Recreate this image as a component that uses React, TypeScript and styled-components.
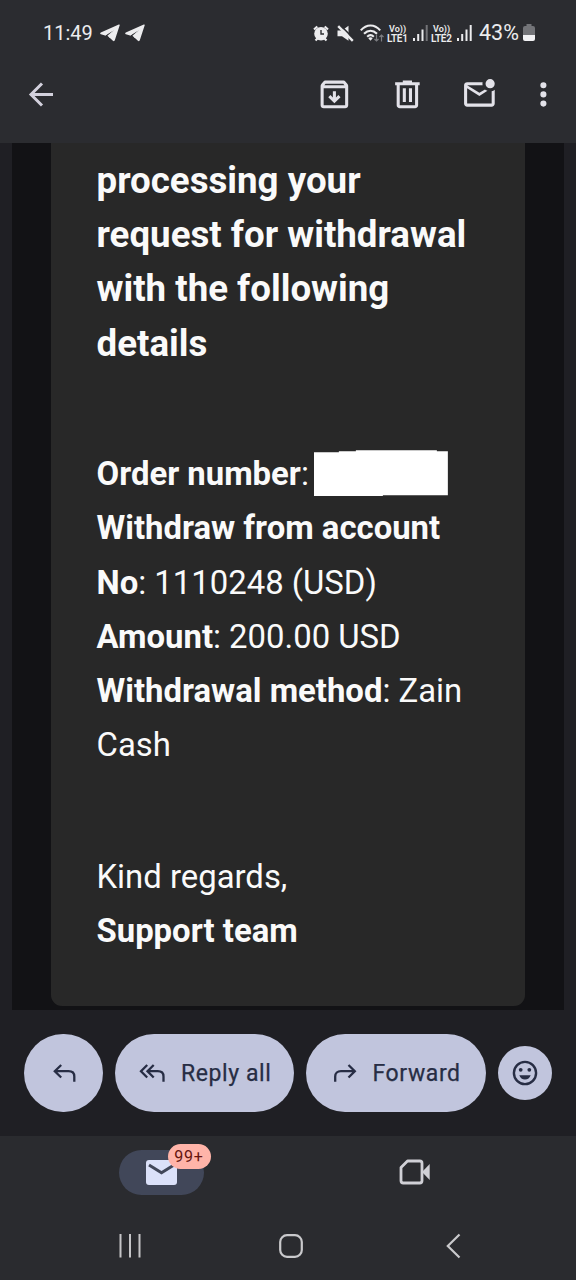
import React from "react";
import styled, { createGlobalStyle } from "styled-components";

const GlobalStyle = createGlobalStyle`
  *, *::before, *::after { box-sizing: border-box; }
  body { margin: 0; background: #1f1f24; }
  svg { display: block; flex: none; }
`;

const Screen = styled.div`
  width: 576px;
  height: 1280px;
  display: flex;
  flex-direction: column;
  overflow: hidden;
  background: #1f1f24;
  font-family: Roboto, "Liberation Sans", sans-serif;
`;

const TopArea = styled.header`
  height: 143px;
  background: #2b2c30;
`;

const StatusBar = styled.div`
  height: 66px;
  padding: 0 41px 0 43px;
  display: flex;
  justify-content: space-between;
  align-items: center;
  color: #ececee;
`;

const StatusGroup = styled.div`
  display: flex;
  align-items: center;
`;

const StatusItem = styled.span<{ $after?: number }>`
  margin-right: ${(p) => p.$after ?? 0}px;
`;

const StatusText = styled.span<{ $width: number; $size?: number }>`
  display: block;
  width: ${(p) => p.$width}px;
  font-size: ${(p) => p.$size ?? 20}px;
  line-height: 24px;
  white-space: nowrap;
`;

const Carrier = styled.span<{ $width: number }>`
  width: ${(p) => p.$width}px;
  display: flex;
  flex-direction: column;
  gap: 1px;
  padding-top: 1px;
  font-size: 10px;
  line-height: 9px;
  font-weight: 600;
  letter-spacing: -0.3px;
  white-space: nowrap;
`;

const CarrierTop = styled.span`
  font-size: 9px;
  line-height: 8px;
  padding-left: 2px;
  letter-spacing: 0;
`;

const Toolbar = styled.div`
  height: 57px;
  padding: 0 14.5px 0 22px;
  display: flex;
  align-items: center;
`;

const ToolActions = styled.div`
  margin-left: auto;
  display: flex;
  align-items: center;
`;

const ToolIcon = styled.span<{ $after?: number }>`
  margin-right: ${(p) => p.$after ?? 0}px;
`;

const Message = styled.main`
  height: 867px;
  margin: 0 12px;
  padding: 0 39px 4px;
  background: #121215;
`;

const Card = styled.article`
  height: 863px;
  padding: 11px 0 0 45.5px;
  border-radius: 0 0 11px 11px;
  background: #282828;
  color: #fafafa;
`;

const Block = styled.section<{ $size: number; $gap?: number }>`
  margin: 0 0 ${(p) => p.$gap ?? 0}px;
  font-size: ${(p) => p.$size}px;
`;

const Line = styled.p`
  margin: 0;
  height: 54.2px;
  line-height: 54.2px;
  white-space: nowrap;
`;

const Redacted = styled.span`
  display: inline-block;
  width: 134px;
  height: 46px;
  margin-left: 5px;
  vertical-align: -11px;
  background: #ffffff;
  clip-path: polygon(0 2px, 25px 2px, 25px 1px, 42px 1px, 42px 0, 123px 0, 123px 1px, 134px 1px, 134px 45px, 69px 45px, 69px 46px, 0 46px);
`;

const ReplyBar = styled.div`
  height: 126px;
  padding: 0 24px;
  display: flex;
  align-items: center;
  gap: 11.7px;
  background: #1f1f24;
`;

const ReplyButton = styled.button<{ $width: number; $height?: number }>`
  width: ${(p) => p.$width}px;
  height: ${(p) => p.$height ?? 78}px;
  padding: 0;
  flex: none;
  display: flex;
  align-items: center;
  justify-content: center;
  gap: 16px;
  border: 0;
  border-radius: 39px;
  background: #c1c5dd;
  color: #272d44;
  font: 400 23px/28px Roboto, "Liberation Sans", sans-serif;
  letter-spacing: 0.6px;
  white-space: nowrap;
`;

const ButtonLabel = styled.span`
  padding-top: 1px;
  margin-right: -1.5px;
  -webkit-text-stroke: 0.25px #272d44;
`;

const BottomArea = styled.footer`
  height: 144px;
  background: #2a2b2f;
`;

const Tabs = styled.nav`
  height: 72px;
  padding: 0 35px;
  display: grid;
  grid-template-columns: 1fr 1fr;
  align-items: center;
  justify-items: center;
`;

const MailTab = styled.div`
  position: relative;
  width: 85px;
  height: 45px;
  display: flex;
  align-items: center;
  justify-content: center;
  border-radius: 23px;
  background: #414759;
`;

const Badge = styled.span`
  position: absolute;
  left: 48.5px;
  top: -6px;
  width: 43px;
  height: 25px;
  border-radius: 13px;
  background: #ffb4a9;
  color: #65150f;
  font-size: 16px;
  line-height: 25px;
  letter-spacing: 0.8px;
  text-align: center;
`;

const SystemNav = styled.div`
  height: 72px;
  padding: 4px 0 0 118px;
  display: grid;
  grid-template-columns: 161px 167px auto;
  align-items: center;
`;

const Plane = () => (
  <svg width="20" height="18" viewBox="0 0 20 18" fill="#ececee">
    <path d="M18.8 .5 .8 8.6c-.9.5-.8 1.300.1 1.600l4.300 1.200L13.600 6.400l-5 6.400 4.300 4c.9.700 1.700.4 2-.7L19.700 1.300c.2-.8-.2-1.100-.9-.8Z" />
    <path d="M3 10.200 13 5.600 5.500 11.400ZM13.600 6.200 7.400 11.800 10 14Z" />
  </svg>
);

const AlarmIcon = () => (
  <svg width="16" height="17" viewBox="0 0 16 17" fill="none">
    <path d="M1 4.500 4.300 1.500M15 4.500l-3.300-3M2.500 15.500l2-2M13.500 15.500l-2-2" stroke="#ececee" strokeWidth="2.200" />
    <circle cx="8" cy="8.700" r="6.800" fill="#ececee" />
    <path d="M8 5v4h3" stroke="#2b2c30" strokeWidth="1.400" />
  </svg>
);

const MuteIcon = () => (
  <svg width="17" height="17" viewBox="0 0 17 17" fill="none">
    <path d="M.5 5.400h4.500L11.500.8v15L5 11.200H.5Z" fill="#ececee" />
    <path d="M2.500-.5 17.500 14.500" stroke="#2b2c30" strokeWidth="1.600" />
    <path d="M1.200 1.200 15.800 15.800" stroke="#ececee" strokeWidth="2.400" />
  </svg>
);

const WifiIcon = () => (
  <svg width="24" height="19" viewBox="0 0 24 19" fill="none">
    <g stroke="#ececee" strokeWidth="2.100">
      <path d="M.8 6.400C6.500-.2 14.500-.2 20.200 6.400" />
      <path d="M4 9.800c4-4 9-4 13 0" />
      <path d="M7.200 12.800c2-2 4.600-2 6.600 0" />
    </g>
    <path d="m8.300 14.300 2.200 2.500 2.200-2.500c-1.300-1.300-3.100-1.300-4.400 0Z" fill="#ececee" />
    <path d="M16.500 10.500v6.500m-2-2 2 2 2-2M21.500 17.500v-6.500m-2 2 2-2 2 2" stroke="#7c7d81" strokeWidth="1.200" />
  </svg>
);

const SignalIcon = ({ full }: { full: boolean }) => (
  <svg width="15" height="16" viewBox="0 0 15 16" fill="#ececee">
    <path d="M0 13h2v3H0ZM4.200 9h2v7h-2ZM8.500 4.500h2V16h-2Z" />
    <path d="M12.700 0h2v16h-2Z" fill={full ? "#ececee" : "#737478"} />
  </svg>
);

const BatteryIcon = () => (
  <svg width="12" height="18" viewBox="0 0 12 18">
    <path d="M3.500 0h5v2H10q2 0 2 2v7H0V4q0-2 2-2h1.500Z" fill="#737478" />
    <path d="M0 11h12v4q0 2-2 2H2q-2 0-2-2Z" fill="#f2f2f4" />
  </svg>
);

const iconPaths = {
  archive:
    "M20.54 5.23l-1.39-1.68C18.88 3.21 18.47 3 18 3H6c-.47 0-.88.21-1.16.55L3.46 5.23C3.17 5.57 3 6.02 3 6.5V19c0 1.1.9 2 2 2h14c1.1 0 2-.9 2-2V6.5c0-.48-.17-.93-.46-1.27zM6.24 5h11.52l.83 1H5.42l.82-1zM5 19V8h14v11H5zm11-5.2l-4 4-4-4 1.4-1.4L11 14V10h2v4l1.6-1.6z",
  trash:
    "M7 21q-.825 0-1.412-.587Q5 19.825 5 19V6H4V4h5V3h6v1h5v2h-1v13q0 .825-.587 1.413Q17.825 21 17 21ZM17 6H7v13h10ZM9 17h2V8H9Zm4 0h2V8h-2Z",
  unread:
    "M4 20q-.825 0-1.412-.587Q2 18.825 2 18V6q0-.825.588-1.412Q3.175 4 4 4h10.1q-.1.5-.1 1t.1 1H4l8 5 3.65-2.275q.35.325.763.562.412.238.862.413L12 13 4 8v10h16V9.9q.575-.125 1.075-.35.5-.225.925-.55v9q0 .825-.587 1.413Q20.825 20 20 20ZM19 8q-1.25 0-2.125-.875T16 5q0-1.25.875-2.125T19 2q1.25 0 2.125.875T22 5q0 1.25-.875 2.125T19 8Z",
  more: "M12 8a2 2 0 1 0 0-4 2 2 0 0 0 0 4Zm0 6a2 2 0 1 0 0-4 2 2 0 0 0 0 4Zm0 6a2 2 0 1 0 0-4 2 2 0 0 0 0 4Z",
};

const MaterialIcon = ({ name }: { name: keyof typeof iconPaths }) => (
  <svg width="36.8" height="36.8" viewBox="0 0 24 24" fill="#e3e2e9" fillRule="evenodd">
    <path d={iconPaths[name]} />
  </svg>
);

const BackArrow = () => (
  <svg width="37" height="37" viewBox="0 0 37 37" fill="none" stroke="#d3d1dd" strokeWidth="3">
    <path d="M31 18.500H9.500M20 7.500l-11 11 11 11" />
  </svg>
);

const ReplyIcon = () => (
  <svg width="24" height="20" viewBox="0 0 24 20" fill="none" stroke="#272d44" strokeWidth="2.300">
    <path d="M9.200 2 2.800 8.200l6.400 6.300M3 8.200h13.500c3.500 0 5.800 2 5.800 5.300v5.300" />
  </svg>
);

const ReplyAllIcon = () => (
  <svg width="26" height="20" viewBox="0 0 26 20" fill="none" stroke="#272d44" strokeWidth="2.300">
    <path d="M8.200 2 2 8.200l6.200 6.300M14.700 2 8.500 8.200l6.200 6.300M8.800 8.200h10c3.500 0 5.700 2 5.700 5.300v5.300" />
  </svg>
);

const ForwardIcon = () => (
  <svg width="24" height="20" viewBox="0 0 24 20" fill="none" stroke="#272d44" strokeWidth="2.300">
    <path d="m15.500 2 6.300 6.200-6.300 6.300M21.500 8.200H8c-3.500 0-5.800 2-5.800 5.300v5.300" />
  </svg>
);

const EmojiIcon = () => (
  <svg width="26" height="26" viewBox="0 0 26 26" fill="#272d44">
    <circle cx="13" cy="13" r="11.100" fill="none" stroke="#272d44" strokeWidth="2.400" />
    <circle cx="8.700" cy="9.800" r="1.900" />
    <circle cx="17.300" cy="9.800" r="1.900" />
    <path d="M7.300 15.200h11.400c-.9 2.700-3 4.300-5.700 4.300s-4.800-1.600-5.700-4.300Z" />
  </svg>
);

const MailIcon = () => (
  <svg width="31" height="25" viewBox="0 0 31 25" fill="none">
    <rect width="31" height="25" rx="3" fill="#dbe1f9" />
    <path d="m3 5 12.500 7.700L28 5" stroke="#414759" strokeWidth="3" />
  </svg>
);

const MeetIcon = () => (
  <svg width="32" height="26" viewBox="0 0 32 26" fill="none">
    <path d="M8.500 2h12.300q2.200 0 2.200 2.200v17.600q0 2.200-2.200 2.200H4.200Q2 24 2 21.800V8.500Z" stroke="#d0d0d6" strokeWidth="2.800" strokeLinejoin="round" />
    <path d="M23 13 30.700 5v16Z" fill="#d0d0d6" />
  </svg>
);

const RecentsIcon = () => (
  <svg width="24" height="24" viewBox="0 0 24 24" stroke="#c5c5c8" strokeWidth="2">
    <path d="M2.500 0v23.500M12 0v23.500M21.500 0v23.500" />
  </svg>
);

const HomeIcon = () => (
  <svg width="24" height="24" viewBox="0 0 24 24" fill="none" stroke="#c9c9cc" strokeWidth="2.200">
    <rect x="1.200" y="1.200" width="21.600" height="21.600" rx="6.800" />
  </svg>
);

const NavBackIcon = () => (
  <svg width="15" height="26" viewBox="0 0 15 26" fill="none" stroke="#c9c9cc" strokeWidth="2.200">
    <path d="M13.500 1.500 1.800 13l11.700 11.500" />
  </svg>
);

export default function App() {
  return (
    <Screen>
      <GlobalStyle />
      <TopArea>
        <StatusBar>
          <StatusGroup>
            <StatusItem $after={5}><StatusText $width={52}>11:49</StatusText></StatusItem>
            <StatusItem $after={5}><Plane /></StatusItem>
            <Plane />
          </StatusGroup>
          <StatusGroup>
            <StatusItem $after={7.5}><AlarmIcon /></StatusItem>
            <StatusItem $after={6.5}><MuteIcon /></StatusItem>
            <StatusItem $after={3}><WifiIcon /></StatusItem>
            <StatusItem $after={4.5}>
              <Carrier $width={21}>
                <CarrierTop>Vo))</CarrierTop>
                <span>LTE1</span>
              </Carrier>
            </StatusItem>
            <StatusItem $after={3.5}><SignalIcon full={false} /></StatusItem>
            <StatusItem $after={4}>
              <Carrier $width={22}>
                <CarrierTop>Vo))</CarrierTop>
                <span>LTE2</span>
              </Carrier>
            </StatusItem>
            <StatusItem $after={7}><SignalIcon full /></StatusItem>
            <StatusItem $after={3}><StatusText $width={41} $size={21.5}>43%</StatusText></StatusItem>
            <BatteryIcon />
          </StatusGroup>
        </StatusBar>
        <Toolbar>
          <BackArrow />
          <ToolActions>
            <ToolIcon $after={35.5}><MaterialIcon name="archive" /></ToolIcon>
            <ToolIcon $after={36}><MaterialIcon name="trash" /></ToolIcon>
            <ToolIcon $after={26.5}><MaterialIcon name="unread" /></ToolIcon>
            <ToolIcon><MaterialIcon name="more" /></ToolIcon>
          </ToolActions>
        </Toolbar>
      </TopArea>
      <Message>
        <Card>
          <Block as="h2" $size={36.7} $gap={76.5}>
            <Line as="div">processing your</Line>
            <Line as="div">request for withdrawal</Line>
            <Line as="div">with the following</Line>
            <Line as="div">details</Line>
          </Block>
          <Block $size={32.87} $gap={77.5}>
            <Line><b>Order number</b>:<Redacted /></Line>
            <Line><b>Withdraw from account</b></Line>
            <Line><b>No</b>: 1110248 (USD)</Line>
            <Line><b>Amount</b>: 200.00 USD</Line>
            <Line><b>Withdrawal method</b>: Zain</Line>
            <Line>Cash</Line>
          </Block>
          <Block $size={32.87}>
            <Line>Kind regards,</Line>
            <Line><b>Support team</b></Line>
          </Block>
        </Card>
      </Message>
      <ReplyBar>
        <ReplyButton $width={79} aria-label="Reply"><ReplyIcon /></ReplyButton>
        <ReplyButton $width={179.5}><ReplyAllIcon /><ButtonLabel>Reply all</ButtonLabel></ReplyButton>
        <ReplyButton $width={180}><ForwardIcon /><ButtonLabel>Forward</ButtonLabel></ReplyButton>
        <ReplyButton $width={54} $height={54} aria-label="React"><EmojiIcon /></ReplyButton>
      </ReplyBar>
      <BottomArea>
        <Tabs>
          <MailTab>
            <MailIcon />
            <Badge>99+</Badge>
          </MailTab>
          <MeetIcon />
        </Tabs>
        <SystemNav>
          <RecentsIcon />
          <HomeIcon />
          <NavBackIcon />
        </SystemNav>
      </BottomArea>
    </Screen>
  );
}
